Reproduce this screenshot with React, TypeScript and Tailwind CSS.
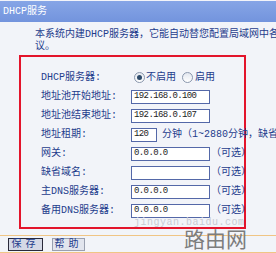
import React from "react";

const font = { fontFamily: '"Liberation Mono", "Noto Sans CJK SC", monospace' };

const rows: { label: string; kind: string; value?: string }[] = [
  { label: "DHCP服务器:", kind: "radio" },
  { label: "地址池开始地址:", kind: "input", value: "192.168.0.100" },
  { label: "地址池结束地址:", kind: "input", value: "192.168.0.107" },
  { label: "地址租期:", kind: "lease", value: "120" },
  { label: "网关:", kind: "opt", value: "0.0.0.0" },
  { label: "缺省域名:", kind: "opt", value: "" },
  { label: "主DNS服务器:", kind: "opt", value: "0.0.0.0" },
  { label: "备用DNS服务器:", kind: "opt", value: "0.0.0.0" },
];

const Radio = ({ on }: { on?: boolean }) => (
  <span className="inline-flex h-[11px] w-[11px] shrink-0 items-center justify-center rounded-full border border-[#8a97ad] bg-gradient-to-b from-[#e3e7ef] to-white">
    {on && <span className="h-[5px] w-[5px] rounded-full bg-[#2d4a6a]" />}
  </span>
);

const Box = ({ value, w }: { value?: string; w: string }) => (
  <div
    className={`${w} flex h-[14px] shrink-0 items-center border border-[#5468a8] bg-white pl-[2px] text-[9px] leading-none tracking-[-0.6px] text-[#222]`}
  >
    {value}
  </div>
);

export default function App() {
  return (
    <div className="relative h-[253px] w-[276px] overflow-hidden bg-[#f2f4f9]" style={font}>
      {/* HEADER */}
      <div className="mt-[1px] flex h-[21px] items-center bg-gradient-to-b from-[#86a5e6] to-[#7394dd] pl-[3px] text-[10px] text-white">
        DHCP服务
      </div>

      {/* INTRO */}
      <div className="pl-[35px] pt-[7px] text-[10px] leading-[12px] text-[#1e3c8c] whitespace-nowrap">
        本系统内建DHCP服务器，它能自动替您配置局域网中各计
      </div>
      <div className="pl-[35px] text-[10px] leading-[12px] text-[#1e3c8c]">议。</div>

      {/* FORM */}
      <div className="ml-[19px] mt-[2px] h-[174px] w-[227px] border-2 border-[#e3142b] pt-[11px]">
        {rows.map((r) => (
          <div key={r.label} className="flex h-[19px] items-center">
            <div className="w-[110px] shrink-0 pl-[20px] text-[10px] text-[#1e3c8c] whitespace-nowrap">
              {r.label}
            </div>
            {r.kind === "radio" && (
              <div className="flex items-center pl-[3px] text-[10px] text-[#1e3c8c] whitespace-nowrap">
                <Radio on />
                <span className="ml-[1px]">不启用</span>
                <span className="ml-[6px]" />
                <Radio />
                <span className="ml-[2px]">启用</span>
              </div>
            )}
            {r.kind === "input" && <Box value={r.value} w="w-[79px]" />}
            {r.kind === "lease" && (
              <div className="flex items-center whitespace-nowrap text-[10px] text-[#1e3c8c]">
                <Box value={r.value} w="w-[26px]" />
                <span className="ml-[5px]">分钟（1~2880分钟，缺省为</span>
              </div>
            )}
            {r.kind === "opt" && (
              <div className="flex items-center whitespace-nowrap text-[10px] text-[#1e3c8c]">
                <Box value={r.value} w="w-[79px]" />
                <span className="ml-[1px]">（可选）</span>
              </div>
            )}
          </div>
        ))}
      </div>

      {/* FOOTER */}
      <div className="mt-[6px] border-t-[1.5px] border-[#f0c585]" />
      <div className="flex h-[16px] items-center gap-[9px] pl-[8px] pt-[1px]">
        <button className="flex h-[13px] w-[35px] items-center justify-center border border-[#2a2a3a] bg-[#d5d9e6] text-[10px] leading-none tracking-[4px] text-[#1e3c8c]">
          保存
        </button>
        <button className="flex h-[13px] w-[33px] items-center justify-center border border-[#9aa0b0] bg-[#e2e5ee] text-[10px] leading-none tracking-[4px] text-[#1e3c8c]">
          帮助
        </button>
      </div>
      <div className="border-t-[1.5px] border-[#f0c585]" />

      {/* WATERMARKS */}
      <div className="absolute left-[184px] top-[231px] text-[21px] leading-none text-[#7d7d7d]">路由网</div>
      <div className="absolute left-[134px] top-[218px] text-[10px] leading-none tracking-[0.5px] text-[#c8cbd3]">
        jingyan.baidu.com
      </div>
    </div>
  );
}
